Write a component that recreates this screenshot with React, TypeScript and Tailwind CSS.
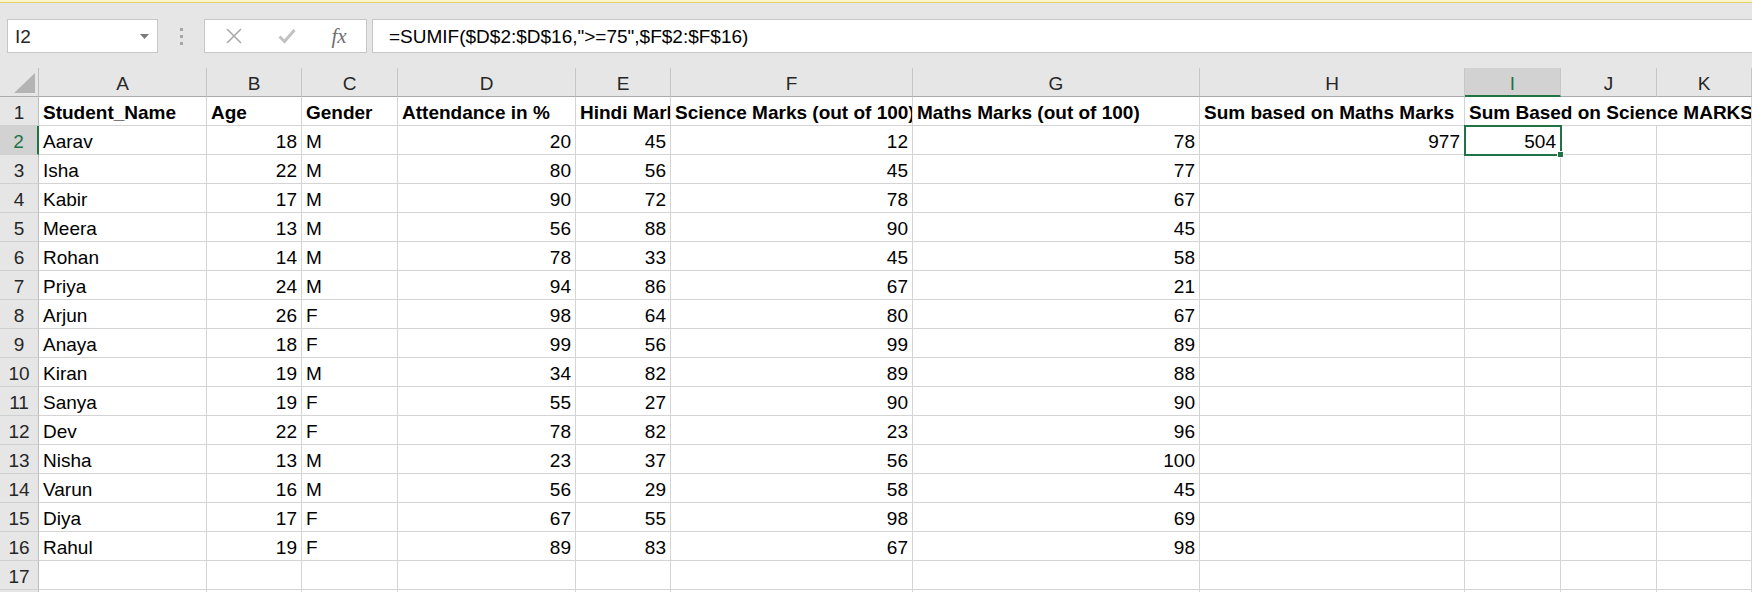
import React from "react";

const COLS = ["A", "B", "C", "D", "E", "F", "G", "H", "I", "J", "K"];

const HEADERS = [
  "Student_Name",
  "Age",
  "Gender",
  "Attendance in %",
  "Hindi Marks (out of 100)",
  "Science Marks (out of 100)",
  "Maths Marks (out of 100)",
  "Sum based on Maths Marks",
];

const ROWS: [string, number, string, number, number, number, number][] = [
  ["Aarav", 18, "M", 20, 45, 12, 78],
  ["Isha", 22, "M", 80, 56, 45, 77],
  ["Kabir", 17, "M", 90, 72, 78, 67],
  ["Meera", 13, "M", 56, 88, 90, 45],
  ["Rohan", 14, "M", 78, 33, 45, 58],
  ["Priya", 24, "M", 94, 86, 67, 21],
  ["Arjun", 26, "F", 98, 64, 80, 67],
  ["Anaya", 18, "F", 99, 56, 99, 89],
  ["Kiran", 19, "M", 34, 82, 89, 88],
  ["Sanya", 19, "F", 55, 27, 90, 90],
  ["Dev", 22, "F", 78, 82, 23, 96],
  ["Nisha", 13, "M", 23, 37, 56, 100],
  ["Varun", 16, "M", 56, 29, 58, 45],
  ["Diya", 17, "F", 67, 55, 98, 69],
  ["Rahul", 19, "F", 89, 83, 67, 98],
];

const cellBase =
  "h-[29px] flex items-end pb-[3px] leading-[19px] whitespace-nowrap overflow-hidden border-r border-b border-[#d4d4d4] bg-white text-black";

function Cell({ value, bold, extra }: { value?: string | number; bold?: boolean; extra?: string }) {
  const isNum = typeof value === "number";
  return (
    <div
      className={`${cellBase} ${isNum ? "justify-end pr-[4px]" : "justify-start pl-[4px]"} ${
        bold ? "font-bold" : ""
      } ${extra ?? ""}`}
    >
      {value}
    </div>
  );
}

function RowHead({ n, active }: { n: number; active?: boolean }) {
  return (
    <div
      className={`h-[29px] flex items-end justify-center pb-[3px] leading-[19px] border-b border-[#cfcfcf] ${
        active
          ? "bg-[#d2d2d2] text-[#217346] border-r-2 border-r-[#217346]"
          : "bg-[#e6e6e6] text-[#262626] border-r border-r-[#bdbdbd]"
      }`}
    >
      {n}
    </div>
  );
}

export default function App() {
  return (
    <div
      className="w-full h-[592px] overflow-hidden bg-white text-[19px]"
      style={{ fontFamily: '"Liberation Sans", Arial, sans-serif' }}
    >
      {/* formula bar */}
      <div className="h-[68px] bg-[#e6e6e6] flex flex-col">
        <div className="h-[2px] bg-[#fbf4c8]" />
        <div className="h-[1px] bg-[#e2d271]" />
        <div className="mt-[16px] h-[34px] flex items-stretch">
          <div className="ml-[7px] w-[151px] bg-white border border-[#c6c6c6] flex items-center pl-[7px] pr-[8px] justify-between text-[#262626]">
            <span className="leading-[19px]">I2</span>
            <svg width="9" height="5" viewBox="0 0 9 5">
              <path d="M0 0 L9 0 L4.5 5 Z" fill="#7a7a7a" />
            </svg>
          </div>
          <div className="w-[46px] flex flex-col items-center justify-center gap-[4px]">
            <div className="w-[3px] h-[3px] bg-[#a6a6a6]" />
            <div className="w-[3px] h-[3px] bg-[#a6a6a6]" />
            <div className="w-[3px] h-[3px] bg-[#a6a6a6]" />
          </div>
          <div className="w-[163px] bg-white border border-[#c6c6c6] flex items-center">
            <div className="w-[56px] flex justify-center pl-[2px]">
              <svg width="16" height="16" viewBox="0 0 16 16">
                <path d="M1 1 L15 15 M15 1 L1 15" stroke="#a9a9a9" strokeWidth="1.6" fill="none" />
              </svg>
            </div>
            <div className="w-[52px] flex justify-center">
              <svg width="18" height="16" viewBox="0 0 18 16">
                <path d="M1.5 8.5 L6.5 13.5 L16.5 2" stroke="#c2c2c2" strokeWidth="3" fill="none" />
              </svg>
            </div>
            <div
              className="w-[52px] flex justify-center text-[#6f6f6f] italic text-[21px] leading-[21px]"
              style={{ fontFamily: '"Liberation Serif", "Times New Roman", serif' }}
            >
              fx
            </div>
          </div>
          <div className="ml-[5px] flex-1 bg-white border border-r-0 border-[#c6c6c6] flex items-center pl-[16px] text-black">
            <span className="leading-[19px]">=SUMIF($D$2:$D$16,"&gt;=75",$F$2:$F$16)</span>
          </div>
        </div>
      </div>

      {/* sheet grid */}
      <div className="grid grid-cols-[39px_168px_95px_96px_178px_95px_242px_287px_265px_96px_96px_1fr]">
        {/* column headers */}
        <div className="h-[29px] bg-[#e6e6e6] border-r border-b border-r-[#bdbdbd] border-b-[#ababab] flex items-end justify-end pr-[3px] pb-[3px]">
          <svg width="21" height="20" viewBox="0 0 21 20">
            <path d="M21 0 L21 20 L0 20 Z" fill="#b4b4b4" />
          </svg>
        </div>
        {COLS.map((c) =>
          c === "I" ? (
            <div
              key={c}
              className="h-[29px] bg-[#d2d2d2] border-r border-r-[#c6c6c6] border-b-2 border-b-[#217346] flex items-end justify-center pb-[2px] leading-[19px] text-[#217346]"
            >
              {c}
            </div>
          ) : (
            <div
              key={c}
              className="h-[29px] bg-[#e6e6e6] border-r border-r-[#c6c6c6] border-b border-b-[#ababab] flex items-end justify-center pb-[3px] leading-[19px] text-[#262626]"
            >
              {c}
            </div>
          )
        )}

        {/* row 1 */}
        <RowHead n={1} />
        {HEADERS.map((h) => (
          <Cell key={h} value={h} bold />
        ))}
        <Cell value="Sum Based on Science MARKS" bold extra="col-span-3" />

        {/* data rows */}
        {ROWS.map((r, i) => (
          <React.Fragment key={r[0]}>
            <RowHead n={i + 2} active={i === 0} />
            {r.map((v, j) => (
              <Cell key={j} value={v} />
            ))}
            {i === 0 ? (
              <>
                <Cell value={977} />
                <div className={`${cellBase} justify-end pr-[4px] relative overflow-visible`}>
                  504
                  <div className="absolute -top-[1px] -left-[1px] -right-[2px] -bottom-[2px] border-2 border-[#217346] pointer-events-none" />
                  <div className="absolute -right-[4px] -bottom-[4px] w-[7px] h-[7px] bg-[#217346] border border-white" />
                </div>
              </>
            ) : (
              <>
                <Cell />
                <Cell />
              </>
            )}
            <Cell />
            <Cell />
          </React.Fragment>
        ))}

        {/* rows 17, 18 */}
        {[17, 18].map((n) => (
          <React.Fragment key={n}>
            <RowHead n={n} />
            {COLS.map((c) => (
              <Cell key={c} />
            ))}
          </React.Fragment>
        ))}
      </div>
    </div>
  );
}
